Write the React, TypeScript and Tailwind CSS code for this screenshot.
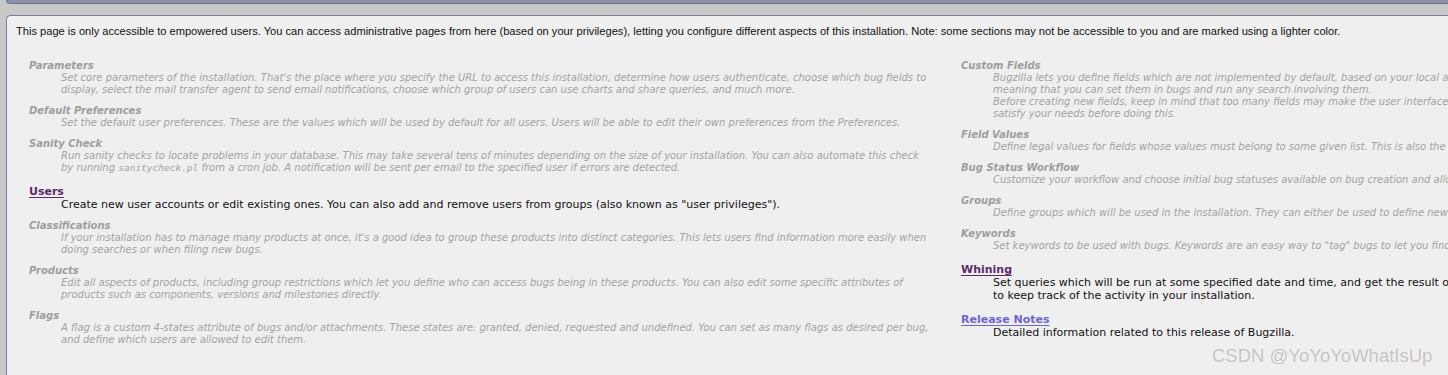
import React from "react";

type Item = {
  title: string;
  lines: React.ReactNode[];
  link?: "visited" | "new";
};

const leftItems: Item[] = [
  {
    title: "Parameters",
    lines: [
      "Set core parameters of the installation. That's the place where you specify the URL to access this installation, determine how users authenticate, choose which bug fields to",
      "display, select the mail transfer agent to send email notifications, choose which group of users can use charts and share queries, and much more.",
    ],
  },
  {
    title: "Default Preferences",
    lines: [
      "Set the default user preferences. These are the values which will be used by default for all users. Users will be able to edit their own preferences from the Preferences.",
    ],
  },
  {
    title: "Sanity Check",
    lines: [
      "Run sanity checks to locate problems in your database. This may take several tens of minutes depending on the size of your installation. You can also automate this check",
      <>
        by running <tt className="font-['DejaVu_Sans_Mono',monospace] text-[9.5px]">sanitycheck.pl</tt> from a cron job. A
        notification will be sent per email to the specified user if errors are detected.
      </>,
    ],
  },
  {
    title: "Users",
    link: "visited",
    lines: [
      'Create new user accounts or edit existing ones. You can also add and remove users from groups (also known as "user privileges").',
    ],
  },
  {
    title: "Classifications",
    lines: [
      "If your installation has to manage many products at once, it's a good idea to group these products into distinct categories. This lets users find information more easily when",
      "doing searches or when filing new bugs.",
    ],
  },
  {
    title: "Products",
    lines: [
      "Edit all aspects of products, including group restrictions which let you define who can access bugs being in these products. You can also edit some specific attributes of",
      "products such as components, versions and milestones directly.",
    ],
  },
  {
    title: "Flags",
    lines: [
      "A flag is a custom 4-states attribute of bugs and/or attachments. These states are: granted, denied, requested and undefined. You can set as many flags as desired per bug,",
      "and define which users are allowed to edit them.",
    ],
  },
];

const rightItems: Item[] = [
  {
    title: "Custom Fields",
    lines: [
      "Bugzilla lets you define fields which are not implemented by default, based on your local and specific requirements. These fields can then be used as any other field,",
      "meaning that you can set them in bugs and run any search involving them.",
      "Before creating new fields, keep in mind that too many fields may make the user interface more complex and harder to use. Be sure you have investigated other ways to",
      "satisfy your needs before doing this.",
    ],
  },
  {
    title: "Field Values",
    lines: [
      "Define legal values for fields whose values must belong to some given list. This is also the place where you define legal values for some types of custom fields.",
    ],
  },
  {
    title: "Bug Status Workflow",
    lines: [
      "Customize your workflow and choose initial bug statuses available on bug creation and allowed bug status transitions when editing existing bugs.",
    ],
  },
  {
    title: "Groups",
    lines: [
      "Define groups which will be used in the installation. They can either be used to define new user privileges or to restrict the access to some bugs.",
    ],
  },
  {
    title: "Keywords",
    lines: [
      'Set keywords to be used with bugs. Keywords are an easy way to "tag" bugs to let you find them more easily later.',
    ],
  },
  {
    title: "Whining",
    link: "visited",
    lines: [
      "Set queries which will be run at some specified date and time, and get the result of these queries directly per email. This is a good way to create reminders and",
      "to keep track of the activity in your installation.",
    ],
  },
  {
    title: "Release Notes",
    link: "new",
    lines: ["Detailed information related to this release of Bugzilla."],
  },
];

function AdminList({ items }: { items: Item[] }) {
  return (
    <dl className="font-['DejaVu_Sans',Verdana,sans-serif]">
      {items.map((item, i) => {
        const forbidden = !item.link;
        return (
          <div key={item.title} className={i === 0 ? "" : item.link ? "mt-[11px]" : "mt-[9px]"}>
            {forbidden ? (
              <dt className="text-[10px] leading-[12px] font-bold italic text-[#9e9e9e]">{item.title}</dt>
            ) : (
              <dt className="text-[11px] leading-[13px] font-bold">
                <a
                  href="#"
                  className={
                    item.link === "visited"
                      ? "text-[#5c2a6b] underline underline-offset-2"
                      : "text-[#6b66d4] underline underline-offset-2"
                  }
                >
                  {item.title}
                </a>
              </dt>
            )}
            <dd
              className={
                forbidden
                  ? "ml-[32px] text-[10px] leading-[12px] italic text-[#a3a3a3] whitespace-nowrap"
                  : "ml-[32px] text-[11px] leading-[13px] text-[#111] whitespace-nowrap"
              }
            >
              {item.lines.map((line, j) => (
                <div key={j}>{line}</div>
              ))}
            </dd>
          </div>
        );
      })}
    </dl>
  );
}

export default function App() {
  return (
    <div className="relative h-[375px] w-full overflow-hidden bg-[#c8c8c8]">
      <div className="ml-[6px] h-[4px] rounded-bl-[4px] border-b border-l border-[#6f7590] bg-[#8c90aa]" />
      <div className="ml-[6px] mt-[11px] h-[400px] w-[1900px] rounded-tl-[5px] border-l border-t border-[#7a7f99] bg-[#efefef] pl-[9px] pt-[8px]">
        <p className="font-['Liberation_Sans',Arial,sans-serif] text-[11.1px] leading-[14px] text-[#111]">
          This page is only accessible to empowered users. You can access administrative pages from here (based on your
          privileges), letting you configure different aspects of this installation. Note: some sections may not be
          accessible to you and are marked using a lighter color.
        </p>
        <div className="mt-[22px] grid grid-cols-[932px_932px] pl-[13px]">
          <AdminList items={leftItems} />
          <AdminList items={rightItems} />
        </div>
      </div>
      <div className="pointer-events-none absolute left-[1212px] top-[345px] font-['Liberation_Sans',Arial,sans-serif] text-[18.5px] leading-[22px] text-[#c4c4c4] [text-shadow:0_0_1px_#ffffff]">
        CSDN @YoYoYoWhatIsUp
      </div>
    </div>
  );
}
